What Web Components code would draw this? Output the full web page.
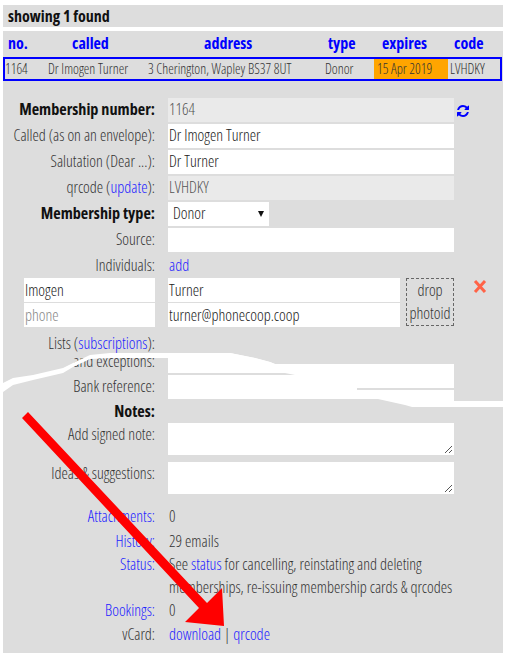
<!DOCTYPE html>
<html>
<head>
<meta charset="utf-8">
<style>
  html, body { margin:0; background:#fff; }
  body { font-family:"Open Sans","Liberation Sans Narrow",sans-serif; font-stretch:condensed; font-weight:300; width:509px; height:657px; overflow:hidden; }
</style>
</head>
<body>
<member-page></member-page>

<script>
customElements.define('search-head',
class SearchHead extends HTMLElement {
  constructor() {
    super()
    this.attachShadow({mode: 'open'}).innerHTML = `
    <style>
      :host { display:block; margin:0 6px 4px 3px; background:#ddd; height:22px; line-height:22px; padding-left:5px; font-size:16px; font-weight:bold; color:#111; }
    </style>
    <slot></slot>`
  }
})

customElements.define('result-table',
class ResultTable extends HTMLElement {
  constructor() {
    super()
    this.attachShadow({mode: 'open'}).innerHTML = `
    <style>
      :host { display:block; }
      .head { display:grid; grid-template-columns:64px 132px 124px 54px 72px 1fr; height:26px; line-height:24px; padding-left:5px; font-size:16px; font-weight:bold; color:#00f; }
      .row { display:grid; grid-template-columns:43px 100px 177px 49px 74px 1fr; height:20px; line-height:20px; border:2px solid #00f; font-size:14px; color:#333; margin-right:1px; }
      .on { background:orange; padding-left:3px; }
      .code { padding-left:2px; }
    </style>
    <div class="head"><span>no.</span><span>called</span><span>address</span><span>type</span><span>expires</span><span>code</span></div>
    <div class="row"><span>1164</span><span>Dr Imogen Turner</span><span>3 Cherington, Wapley BS37 8UT</span><span>Donor</span><span class="on">15 Apr 2019</span><span class="code">LVHDKY</span></div>`
  }
})

customElements.define('form-row',
class FormRow extends HTMLElement {
  constructor() {
    super()
    this.attachShadow({mode: 'open'}).innerHTML = `
    <style>
      :host { display:grid; grid-template-columns:152px 286px; column-gap:13px; font-size:16px; line-height:23px; color:#333; margin-bottom:2px; }
      :host([bold]) .l { font-weight:bold; color:#111; font-size:16.2px; }
      .l { text-align:right; white-space:nowrap; }
    </style>
    <div class="l"><slot name="label"></slot></div>
    <div><slot></slot></div>`
  }
})

customElements.define('text-box',
class TextBox extends HTMLElement {
  constructor() {
    super()
    this.attachShadow({mode: 'open'}).innerHTML = `
    <style>
      :host { display:block; background:#fff; height:24px; line-height:23px; padding-left:1px; font-size:16px; color:#222; position:relative; }
      :host([off]) { background:#eaeaea; color:#555; }
      :host([tall]) { height:32px; }
      svg { position:absolute; right:1px; bottom:1px; display:none; }
      :host([tall]) svg { display:block; }
    </style>
    <slot></slot>
    <svg width="9" height="9" viewBox="0 0 9 9"><path d="M1 8 8 1M5 8 8 5" stroke="#555" fill="none"/></svg>`
  }
})

customElements.define('member-page',
class MemberPage extends HTMLElement {
  constructor() {
    super()
    this.attachShadow({mode: 'open'}).innerHTML = `
    <style>
      :host { display:block; position:relative; width:509px; height:657px; padding-top:5px; box-sizing:border-box; }
      .panel { margin:0 6px 0 3px; background:#ddd; height:622px; overflow:hidden; }
      a { color:#22f; text-decoration:none; }
      .form { padding-top:17px; }
      .val { padding-left:1px; }
      .sel { width:101px; background:#fff; height:24px; line-height:23px; padding-left:5px; box-sizing:border-box; position:relative; color:#222; }
      .sel i { position:absolute; left:90px; top:9px; border:3px solid transparent; border-top:6px solid #111; border-bottom:0; }
      .people { display:grid; grid-template-columns:131px 232px 48px; column-gap:13px; margin:0 0 7px 21px; font-size:16px; color:#222; width:433px; }
      .stack { display:flex; flex-direction:column; gap:1px; }
      .stack text-box { line-height:25px; }
      .photo { margin-left:-7px; width:48px; box-sizing:border-box; border:1px dashed #666; height:48px; text-align:center; line-height:23px; color:#333; }
      .refresh, .x, .torn, .arrow { position:absolute; }
      .refresh { left:456px; top:104px; }
      .x { left:473px; top:280px; }
      .torn, .arrow { left:0; top:0; }
    </style>
    <search-head>showing 1 found</search-head>
    <div class="panel">
      <result-table></result-table>
      <div class="form">
        <form-row bold><span slot="label">Membership number:</span><text-box off>1164</text-box></form-row>
        <form-row><span slot="label">Called (as on an envelope):</span><text-box>Dr Imogen Turner</text-box></form-row>
        <form-row><span slot="label">Salutation (Dear ...):</span><text-box>Dr Turner</text-box></form-row>
        <form-row><span slot="label">qrcode (<a>update</a>):</span><text-box off>LVHDKY</text-box></form-row>
        <form-row bold><span slot="label">Membership type:</span><div class="sel">Donor<i></i></div></form-row>
        <form-row><span slot="label">Source:</span><text-box></text-box></form-row>
        <form-row style="margin-bottom:0;height:24px"><span slot="label">Individuals:</span><span class="val"><a>add</a></span></form-row>
        <div class="people">
          <div class="stack"><text-box>Imogen</text-box><text-box style="color:#888">phone</text-box></div>
          <div class="stack"><text-box>Turner</text-box><text-box>turner@phonecoop.coop</text-box></div>
          <div class="photo">drop<br>photoid</div>
        </div>
        <form-row style="height:15px;line-height:18px;margin-bottom:0"><span slot="label">Lists (<a>subscriptions</a>):</span></form-row>
        <form-row style="line-height:18px"><span slot="label" style="display:block;padding-top:3px">and exceptions:</span><text-box></text-box></form-row>
        <form-row style="margin-bottom:1px"><span slot="label">Bank reference:</span><text-box></text-box></form-row>
        <form-row bold style="height:23px;margin-bottom:0"><span slot="label">Notes:</span></form-row>
        <form-row style="margin-bottom:7px"><span slot="label">Add signed note:</span><text-box tall></text-box></form-row>
        <form-row style="margin-bottom:11px"><span slot="label">Ideas &amp; suggestions:</span><text-box tall></text-box></form-row>
        <form-row style="height:25px;margin-bottom:0"><span slot="label"><a>Attachments:</a></span><span class="val">0</span></form-row>
        <form-row style="height:23px;margin-bottom:0"><span slot="label"><a>History:</a></span><span class="val">29 emails</span></form-row>
        <form-row style="margin-bottom:0"><span slot="label"><a>Status:</a></span><span class="val" style="display:block">See <a>status</a> for cancelling, reinstating and deleting memberships, re-issuing membership cards &amp; qrcodes</span></form-row>
        <form-row style="margin-bottom:1px"><span slot="label"><a>Bookings:</a></span><span class="val">0</span></form-row>
        <form-row style="margin-bottom:0"><span slot="label">vCard:</span><span class="val"><a>download</a> | <a>qrcode</a></span></form-row>
      </div>
    </div>
    <svg class="refresh" width="14" height="14" viewBox="0 0 1792 1792"><path fill="#00f" d="M1639 1056q0 5-1 7-64 268-268 434.5t-478 166.5q-146 0-282.5-55t-243.5-157l-129 129q-19 19-45 19t-45-19-19-45v-448q0-26 19-45t45-19h448q26 0 45 19t19 45-19 45l-137 137q71 66 161 102t187 36q134 0 250-65t186-179q11-17 53-117 8-23 30-23h192q13 0 22.5 9.5t9.5 22.5zm25-800v448q0 26-19 45t-45 19h-448q-26 0-45-19t-19-45 19-45l138-138q-148-137-349-137-134 0-250 65t-186 179q-11 17-53 117-8 23-30 23h-199q-13 0-22.5-9.5t-9.5-22.5v-7q65-268 270-434.5t480-166.5q146 0 284 55.5t245 156.5l130-129q19-19 45-19t45 19 19 45z"/></svg>
    <svg class="x" width="14" height="13" viewBox="0 0 14 13"><path d="M2 1 12 12M12 1 2 12" stroke="tomato" stroke-width="3"/></svg>
    <svg class="torn" width="509" height="657">
      <path fill="#ddd" d="M168 349H454V364H275L270 362 255 358 230 353H168Z"/>
      <path fill="#fff" d="M0 385 3 383 13 378 33 375 63 368 73 363 90 355 110 353H230L255 358 270 362 275 364H454V373H168V358H110L90 359 73 367 63 373 33 380 13 385 3 392 0 394Z"/>
      <path fill="#fff" d="M285 373H454V376H300ZM378 395H454V401H503V407H412L405 405 378 399Z"/>
      <path fill="#ddd" d="M357 388H454V390H357Z"/>
    </svg>
    <svg class="arrow" width="509" height="657"><path d="M28 412 207 603 222 588 224 626 185 622 199 608 22 418Z" fill="#f00"/></svg>`
  }
})
</script>
</body>
</html>
